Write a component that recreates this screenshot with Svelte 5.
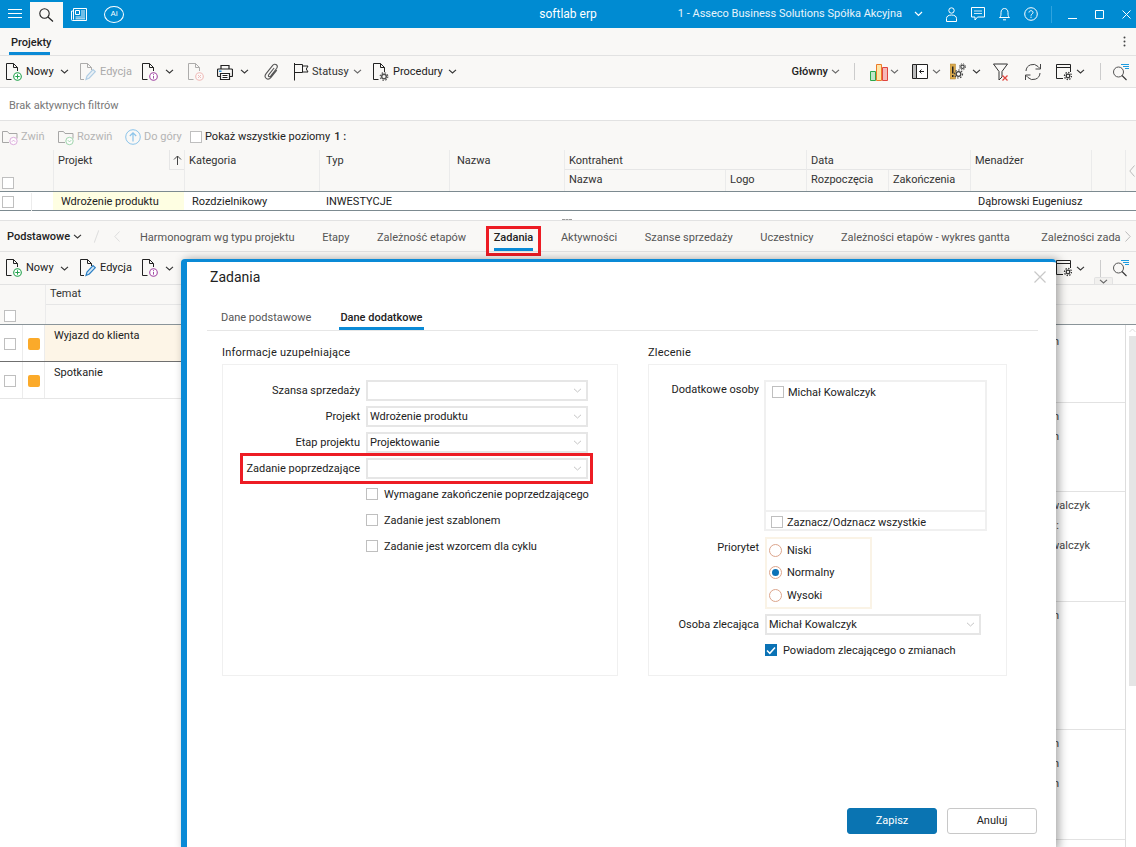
<script>
  const topTools = [
    { i: 'new', t: 'Nowy', w: 74, cg: 6, ch: true },
    { i: 'edit', t: 'Edycja', w: 62, off: true },
    { i: 'info', w: 46, cg: 7, ch: true },
    { i: 'del', w: 29, off: true },
    { i: 'print', w: 47, cg: 7, ch: true },
    { i: 'clip', w: 30 },
    { i: 'flag', t: 'Statusy', w: 79, cg: 4, ch: true, light: true },
    { i: 'proc', t: 'Procedury', w: 90, cg: 5, ch: true }
  ];
  const lowerTools = [
    { i: 'new', t: 'Nowy', w: 74, cg: 6, ch: true },
    { i: 'edit', t: 'Edycja', w: 62 },
    { i: 'info', w: 46, cg: 7, ch: true }
  ];
  const tabs = ['Harmonogram wg typu projektu', 'Etapy', 'Zależność etapów', 'Zadania', 'Aktywności', 'Szanse sprzedaży', 'Uczestnicy', 'Zależności etapów - wykres gantta', 'Zależności zada'];
  const stripRows = [
    { h: 78, lines: [['h', 1]] },
    { h: 89, lines: [['h', 1], ['h', 1]] },
    { h: 110, lines: [['Michał Kowalczyk', 0], [':', 1], ['Michał Kowalczyk', 0]] },
    { h: 128, lines: [['h', 1]] },
    { h: 110, lines: [['h', 1], ['h', 1], ['h', 1]] },
    { h: 7, lines: [] }
  ];
  const formFields = [
    ['Szansa sprzedaży', ''],
    ['Projekt', 'Wdrożenie produktu'],
    ['Etap projektu', 'Projektowanie']
  ];
  const flags = ['Wymagane zakończenie poprzedzającego', 'Zadanie jest szablonem', 'Zadanie jest wzorcem dla cyklu'];
</script>

{#snippet ic(name, w, h)}
  <svg class="ic" width={w} height={h} viewBox="0 0 {w} {h}"><use href="#i-{name}" /></svg>
{/snippet}

{#snippet chev(light)}
  <svg class="chev" class:soft={light} width="9" height="5" viewBox="0 0 9 5"><path d="M1 .8 4.500 4 8 .8" fill="none" stroke="currentColor" stroke-width="1.100" /></svg>
{/snippet}

{#snippet tool(item)}
  <div class="tool" class:off={item.off} class:light={item.light} style="width:{item.w}px">
    {@render ic(item.i, 16, 18)}
    {#if item.t}<span class="tool-label">{item.t}</span>{/if}
    {#if item.ch}<span style="margin-left:{item.cg}px" class="tool-chev">{@render chev(item.light)}</span>{/if}
  </div>
{/snippet}

{#snippet select(value, wide)}
  <div class="select" class:wide>
    <span>{value}</span>
    <svg class="sel-chev" width="9" height="5" viewBox="0 0 9 5"><path d="M1 .8 4.500 4 8 .8" fill="none" stroke="#c4c4c4" stroke-width="1" /></svg>
  </div>
{/snippet}

<svg class="defs" aria-hidden="true">
  <symbol id="i-doc" viewBox="0 0 16 18"><path d="M5.500 16.500H.5V.5h7l4 4V8M7.500.5v4h4" fill="none" stroke="#222" /></symbol>
  <symbol id="i-new" viewBox="0 0 16 18"><use href="#i-doc" /><circle cx="11.500" cy="13.500" r="3.800" fill="#fff" stroke="#23a24d" stroke-width="1.100" /><path d="M11.500 11.300v4.400M9.300 13.500h4.400" stroke="#23a24d" /></symbol>
  <symbol id="i-edit" viewBox="0 0 16 18"><path d="M4 16.500H.5V.5h7l4 4V7M7.500.5v4h4" fill="none" stroke="#222" /><path d="M6 16.500 7 13l6-6.500 2.300 2.200-6 6.300z" fill="#d6e8f6" stroke="#2b7fc4" stroke-width="1.200" /></symbol>
  <symbol id="i-info" viewBox="0 0 16 18"><use href="#i-doc" /><circle cx="11.500" cy="13.500" r="3.800" fill="#fff" stroke="#a349a4" stroke-width="1.100" /><path d="M11.500 13v2.600M11.500 11.200v1" stroke="#a349a4" /></symbol>
  <symbol id="i-del" viewBox="0 0 16 18"><use href="#i-doc" /><circle cx="11.500" cy="13.500" r="3.800" fill="#fff" stroke="#e2504c" stroke-width="1.100" /><path d="m10 12 3 3M13 12l-3 3" stroke="#e2504c" /></symbol>
  <symbol id="i-print" viewBox="0 0 16 18"><path d="M4 6V2.500h8V6M4 13.500H1.500a1 1 0 0 1-1-1V7a1 1 0 0 1 1-1h13a1 1 0 0 1 1 1v5.500a1 1 0 0 1-1 1H12" fill="none" stroke="#222" stroke-width="1.200" /><path d="M3.500 10.500h9v6h-9z" fill="#fff" stroke="#222" stroke-width="1.200" /><path d="M5.500 12.500h5M5.500 14.500h5" stroke="#222" /><path d="M2 7.500h2.500V9H2z" fill="#2b8fd6" /></symbol>
  <symbol id="i-clip" viewBox="0 0 16 18"><path d="M12.800 7.200 7 14.400c-1.500 1.800-3.500 2-4.800 1-1.400-1.100-1.400-3-.1-4.700l6.600-8.300c1-1.300 2.600-1.500 3.700-.6 1.100.9 1.100 2.400.2 3.700l-6 7.600c-.6.700-1.300.8-1.800.4-.5-.4-.5-1.100 0-1.800l5.300-6.700" fill="none" stroke="#555" stroke-width="1.100" /></symbol>
  <symbol id="i-flag" viewBox="0 0 16 18"><path d="M.5 0v17.500M.5 1.500h8v8h-8M8.500 3H14l-1.700 3L14 9H8.500" fill="none" stroke="#222" /></symbol>
  <symbol id="i-proc" viewBox="0 0 16 18"><path d="M5.500 16.500h-5V.5h7l4 4V9M7.500.5v4h4" fill="none" stroke="#222" /><circle cx="11" cy="13.500" r="2.300" fill="none" stroke="#555" stroke-width="1.500" /><circle cx="11" cy="13.500" r="3.800" fill="none" stroke="#555" stroke-width="1.200" stroke-dasharray="1.500 1.500" /></symbol>
  <symbol id="i-chart" viewBox="0 0 20 18"><path d="M1.500 8.500h5v9h-5z" fill="#bfe6c8" stroke="#2aa84a" /><path d="M7.500 1.500h5v16h-5z" fill="#fde6a8" stroke="#ec7a2a" /><path d="M13.500 4.500h5v13h-5z" fill="#f6b8b8" stroke="#e0443e" /></symbol>
  <symbol id="i-panel" viewBox="0 0 16 18"><path d="M.5 1.500h4v14h-4z" fill="#bbb" stroke="#222" /><path d="M4.500 1.500h11v14h-11z" fill="#fff" stroke="#222" /><path d="M12 8.500H7.500M9.500 6.500l-2 2 2 2" fill="none" stroke="#222" /></symbol>
  <symbol id="i-gears" viewBox="0 0 16 18"><path d="M0 1h5.500v15H0z" fill="#d9a94c" stroke="#b0822c" stroke-width=".5" /><path d="M2.750 3.500v7M2.750 12v2" stroke="#222" stroke-width="1.500" /><circle cx="12.500" cy="3.800" r="1.700" fill="none" stroke="#444" stroke-width="1.200" /><circle cx="12.500" cy="3.800" r="3" fill="none" stroke="#444" stroke-dasharray="1.200 1.200" /><circle cx="8.500" cy="11" r="2.300" fill="none" stroke="#444" stroke-width="1.300" /><circle cx="8.500" cy="11" r="4" fill="none" stroke="#444" stroke-width="1.200" stroke-dasharray="1.500 1.500" /></symbol>
  <symbol id="i-filter" viewBox="0 0 16 18"><path d="M.5 1h14L9 8.500V14l-3 3V8.500z" fill="none" stroke="#333" /><path d="m9.500 12.500 5 5M14.500 12.500l-5 5" stroke="#e0443e" stroke-width="1.200" /></symbol>
  <symbol id="i-refresh" viewBox="0 0 16 18"><path d="M1 8a7 7 0 0 1 12-4.500l2 2" fill="none" stroke="#444" /><path d="M15.500 1v5h-5" fill="none" stroke="#444" /><path d="M15 10a7 7 0 0 1-12 4.500l-2-2" fill="none" stroke="#444" /><path d="M.5 17v-5h5" fill="none" stroke="#444" /></symbol>
  <symbol id="i-settings" viewBox="0 0 16 18"><path d="M7 15.500H.5v-14h14V9M.5 4.500h14" fill="none" stroke="#222" /><circle cx="12" cy="13" r="1.800" fill="none" stroke="#333" stroke-width="1.300" /><circle cx="12" cy="13" r="3.500" fill="none" stroke="#333" stroke-width="1.300" stroke-dasharray="1.400 1.300" /></symbol>
  <symbol id="i-search" viewBox="0 0 16 18"><circle cx="5.500" cy="9" r="5" fill="none" stroke="#555" /><path d="m9 12.500 4.500 4.500" stroke="#333" stroke-width="1.100" /><path d="M8 1.500h8M10 3.500h6M12 5.500h4" stroke="#1c9ce0" /></symbol>
  <symbol id="i-folder-up" viewBox="0 0 16 18"><path d="M.5 14.500v-11h5l1.500 2h8v5" fill="none" stroke="#999" /><path d="M.5 14.500H7" stroke="#999" /><circle cx="11.500" cy="13" r="3.700" fill="#fff" stroke="#d79fd8" /><path d="m9.800 13.800 1.700-1.700 1.700 1.700" fill="none" stroke="#d79fd8" /></symbol>
  <symbol id="i-folder-down" viewBox="0 0 16 18"><path d="M.5 14.500v-11h5l1.500 2h8v5" fill="none" stroke="#999" /><path d="M.5 14.500H7" stroke="#999" /><circle cx="11.500" cy="13" r="3.700" fill="#fff" stroke="#8fcf9f" /><path d="m9.800 12.200 1.700 1.700 1.700-1.700" fill="none" stroke="#8fcf9f" /></symbol>
</svg>

<div class="page">
  <header class="topbar">
    <div class="top-left">
      <svg class="burger" width="14" height="10" viewBox="0 0 14 10"><path d="M0 .5h14M0 4.500h14M0 8.500h14" stroke="#fff" stroke-width="1.200" /></svg>
      <div class="top-search">
        <svg width="15" height="14" viewBox="0 0 15 14"><circle cx="5.500" cy="5.500" r="4.700" fill="none" stroke="#222" stroke-width="1.100" /><path d="m9 9 5 4.500" stroke="#222" stroke-width="1.200" /></svg>
      </div>
      <svg class="news" width="16" height="13" viewBox="0 0 16 13"><path d="M2.500.5h13v12H1.500a1 1 0 0 1-1-1V3h2zM2.500 3v8.500" fill="none" stroke="#fff" /><path d="M4.500 2.500h4v4h-4z" fill="none" stroke="#fff" /><path d="M10 3h4M10 5h4M10 7h4M4.500 9H14M4.500 10.800H14" stroke="#fff" stroke-width=".9" /></svg>
      <div class="ai"><span>Ai</span></div>
    </div>
    <div class="brand">softlab erp</div>
    <div class="top-right">
      <span class="company">1 - Asseco Business Solutions Spółka Akcyjna</span>
      <svg class="company-chev" width="9" height="6" viewBox="0 0 9 6"><path d="m1 1 3.500 3.500L8 1" fill="none" stroke="#fff" stroke-width="1.200" /></svg>
      <svg class="t-person" width="11" height="15" viewBox="0 0 11 15"><circle cx="5.500" cy="3.500" r="2.700" fill="none" stroke="#fff" /><path d="M.5 14.500v-3c0-2 1.700-3.500 5-3.500s5 1.500 5 3.500v3z" fill="none" stroke="#fff" /></svg>
      <svg class="t-chat" width="14" height="14" viewBox="0 0 14 14"><path d="M.5.5h13V10h-7L4 13v-3H.5z" fill="none" stroke="#fff" /><path d="M3 4h8M3 6.500h8" stroke="#fff" stroke-width=".8" /></svg>
      <svg class="t-bell" width="11" height="14" viewBox="0 0 11 14"><path d="M.5 10.500c1.500-1 1.500-2.500 1.500-5C2 3 3.500 1.500 5.500 1.500S9 3 9 5.500c0 2.500 0 4 1.500 5zM4 12.800h3" fill="none" stroke="#fff" /></svg>
      <svg class="t-help" width="14" height="14" viewBox="0 0 14 14"><circle cx="7" cy="7" r="6.300" fill="none" stroke="#fff" /><path d="M5 5.500C5 4.300 6 3.700 7 3.700s2 .7 2 1.800c0 1.500-2 1.500-2 3.200M7 9.700v1.200" fill="none" stroke="#fff" /></svg>
      <span class="t-sep"></span>
      <svg class="t-min" width="9" height="1" viewBox="0 0 9 1"><path d="M0 .5h9" stroke="#fff" /></svg>
      <svg class="t-max" width="9" height="9" viewBox="0 0 9 9"><path d="M.5.500h8v8h-8z" fill="none" stroke="#fff" /></svg>
      <svg class="t-close" width="9" height="9" viewBox="0 0 9 9"><path d="m.5.500 8 8M8.500.500l-8 8" stroke="#fff" /></svg>
    </div>
  </header>

  <div class="module-tabs">
    <div class="module-tab">Projekty</div>
    <svg class="kebab" width="3" height="11" viewBox="0 0 3 11"><circle cx="1.500" cy="1.500" r="1" fill="#444" /><circle cx="1.500" cy="5.500" r="1" fill="#444" /><circle cx="1.500" cy="9.500" r="1" fill="#444" /></svg>
  </div>

  <div class="toolbar">
    {#each topTools as item}{@render tool(item)}{/each}
    <div class="tool-right">
      <span class="view-name">Główny</span>
      <span class="vn-chev">{@render chev(true)}</span>
      <span class="tsep first"></span>
      {@render ic('chart', 20, 18)}
      <span class="rc c1">{@render chev(true)}</span>
      {@render ic('panel', 16, 18)}
      <span class="rc c2">{@render chev(true)}</span>
      {@render ic('gears', 16, 18)}
      <span class="rc c3">{@render chev(false)}</span>
      {@render ic('filter', 16, 18)}
      <span class="rg"></span>
      {@render ic('refresh', 16, 18)}
      <span class="rg s"></span>
      {@render ic('settings', 16, 18)}
      <span class="rc c4">{@render chev(false)}</span>
      <span class="tsep"></span>
      {@render ic('search', 16, 18)}
    </div>
  </div>

  <div class="filters">Brak aktywnych filtrów</div>

  <div class="actions">
    <div class="act off one">{@render ic('folder-up', 16, 18)}<span>Zwiń</span></div>
    <div class="act off two">{@render ic('folder-down', 16, 18)}<span>Rozwiń</span></div>
    <div class="act off three">
      <svg width="16" height="16" viewBox="0 0 16 16"><circle cx="8" cy="8" r="7.300" fill="none" stroke="#8cc4ea" /><path d="M8 12.500V4M4.800 7 8 3.800 11.200 7" fill="none" stroke="#8cc4ea" stroke-width="1.200" /></svg>
      <span>Do góry</span>
    </div>
    <span class="check"></span>
    <span class="show-all">Pokaż wszystkie poziomy</span>
    <b class="lvl">1 :</b>
  </div>

  <div class="grid-head">
    <div class="gh span2 chk"><span class="check"></span></div>
    <div class="gh span2">Projekt
      <span class="sort-box"><svg width="9" height="10" viewBox="0 0 9 10"><path d="M4.500 10V1M1 4.500 4.500 1 8 4.500" fill="none" stroke="#444" /></svg></span>
    </div>
    <div class="gh span2">Kategoria</div>
    <div class="gh span2 p7">Typ</div>
    <div class="gh span2 p8">Nazwa</div>
    <div class="gh cols2">Kontrahent</div>
    <div class="gh cols2">Data</div>
    <div class="gh span2">Menadżer</div>
    <div class="gh span2"></div>
    <div class="gh span2 last">
      <svg width="6" height="12" viewBox="0 0 6 12"><path d="M5.500.5.800 6l4.700 5.500" fill="none" stroke="#bbb" /></svg>
    </div>
    <div class="gh sub">Nazwa</div>
    <div class="gh sub">Logo</div>
    <div class="gh sub">Rozpoczęcia</div>
    <div class="gh sub">Zakończenia</div>
  </div>

  <div class="grid-row">
    <div class="gc first"><span class="check"></span><i></i></div>
    <div class="gc yellow">Wdrożenie produktu</div>
    <div class="gc p8c">Rozdzielnikowy</div>
    <div class="gc">INWESTYCJE</div>
    <div class="gc"></div>
    <div class="gc"></div>
    <div class="gc"></div>
    <div class="gc"></div>
    <div class="gc"></div>
    <div class="gc p8c">Dąbrowski Eugeniusz</div>
  </div>

  <div class="splitter"><span class="grip"></span></div>

  <div class="detail-tabs">
    <b class="set">Podstawowe</b>
    <span class="set-chev">{@render chev(false)}</span>
    <span class="slash"></span>
    <svg class="tab-prev" width="6" height="11" viewBox="0 0 6 11"><path d="M5.500.5.800 5.500l4.700 5" fill="none" stroke="#ddd" /></svg>
    <div class="dtabs">
      {#each tabs as t}
        <div class="dtab" class:active={t === 'Zadania'}>{t}</div>
      {/each}
    </div>
    <svg class="tab-next" width="6" height="11" viewBox="0 0 6 11"><path d="m.5.500 4.700 5-4.700 5" fill="none" stroke="#bbb" /></svg>
  </div>

  <div class="toolbar low">
    {#each lowerTools as item}{@render tool(item)}{/each}
    <div class="tool-right">
      {@render ic('settings', 16, 18)}
      <span class="rc c4">{@render chev(false)}</span>
      <span class="tsep"></span>
      {@render ic('search', 16, 18)}
    </div>
    <div class="collapse">{@render chev(true)}</div>
  </div>

  <div class="lower">
    <div class="lower-head">
      <div class="lh-check"><span class="check"></span></div>
      <div class="lh-col">
        <div class="lh-title">Temat</div>
      </div>
    </div>
    <div class="lower-body">
      <div class="task-col">
        <div class="task sel">
          <div class="tk-c"><span class="check"></span></div>
          <div class="tk-m"><span class="mark"></span></div>
          <div class="tk-t">Wyjazd do klienta</div>
        </div>
        <div class="task">
          <div class="tk-c"><span class="check"></span></div>
          <div class="tk-m"><span class="mark"></span></div>
          <div class="tk-t">Spotkanie</div>
        </div>
      </div>
      <div class="strip">
        {#each stripRows as r}
          <div class="strip-row" style="height:{r.h}px">
            {#each r.lines as [txt, short]}
              <div class="strip-line" class:short>{txt}</div>
            {/each}
          </div>
        {/each}
      </div>
      <div class="scroll">
        <svg width="7" height="5" viewBox="0 0 7 5"><path d="M.5 4 3.500 1l3 3" fill="none" stroke="#ddd" /></svg>
        <span class="thumb"></span>
      </div>
    </div>
  </div>

  <section class="modal">
    <div class="m-head">
      <h2>Zadania</h2>
      <svg width="12" height="12" viewBox="0 0 12 12"><path d="m.5.500 11 11M11.500.500l-11 11" stroke="#c8c8c8" stroke-width="1.200" /></svg>
    </div>
    <div class="m-tabs">
      <div class="m-tab">Dane podstawowe</div>
      <div class="m-tab on">Dane dodatkowe</div>
    </div>
    <div class="m-body">
      <div class="sec left">
        <h3>Informacje uzupełniające</h3>
        <div class="sec-box">
          {#each formFields as [label, val]}
            <div class="f-row"><span class="lab">{label}</span>{@render select(val)}</div>
          {/each}
          <div class="f-row hl"><span class="lab">Zadanie poprzedzające</span>{@render select('')}</div>
          <div class="flags">
            {#each flags as f}
              <div class="flag"><span class="check"></span><span class="nudge">{f}</span></div>
            {/each}
          </div>
        </div>
      </div>
      <div class="sec right">
        <h3>Zlecenie</h3>
        <div class="sec-box r">
          <div class="r-row">
            <span class="lab top">Dodatkowe osoby</span>
            <div class="listbox">
              <div class="lb-items"><div class="lb-item"><span class="check"></span><span class="nudge">Michał Kowalczyk</span></div></div>
              <div class="lb-foot"><span class="check"></span><span class="nudge">Zaznacz/Odznacz wszystkie</span></div>
            </div>
          </div>
          <div class="r-row prio">
            <span class="lab top2">Priorytet</span>
            <div class="radios">
              <div class="radio"><span class="dot"></span><span class="nudge">Niski</span></div>
              <div class="radio"><span class="dot sel"></span><span>Normalny</span></div>
              <div class="radio"><span class="dot"></span><span class="nudge">Wysoki</span></div>
            </div>
          </div>
          <div class="r-row who">
            <span class="lab">Osoba zlecająca</span>
            {@render select('Michał Kowalczyk', true)}
          </div>
          <div class="notify">
            <span class="check on"><svg width="10" height="9" viewBox="0 0 10 9"><path d="M1 4.500 3.800 7.300 9 1.500" fill="none" stroke="#fff" stroke-width="1.500" /></svg></span>
            <span class="nudge">Powiadom zlecającego o zmianach</span>
          </div>
        </div>
      </div>
    </div>
    <div class="m-foot">
      <button class="btn primary">Zapisz</button>
      <button class="btn">Anuluj</button>
    </div>
  </section>
</div>

<style>
  :global(body) { margin: 0; background: #fff; }
  .defs { display: none; }
  .page {
    position: relative; width: 1136px; height: 847px; overflow: hidden; background: #fff;
    font: 11px/14px Roboto, "Liberation Sans", sans-serif; color: #222;
  }
  svg { display: block; flex: none; }

  .topbar { height: 28px; background: #008bd2; display: grid; grid-template-columns: 1fr auto 1fr; align-items: center; color: #fff; }
  .top-left { display: flex; align-items: center; height: 28px; }
  .burger { margin-left: 8px; }
  .top-search { width: 33px; height: 26px; margin: 2px 0 0 8px; background: #f9f8f6; display: flex; align-items: center; justify-content: center; }
  .news { margin-left: 8px; }
  .ai { width: 18px; height: 15px; margin-left: 17px; border: 1px solid #fff; border-radius: 50%; display: flex; align-items: center; justify-content: center; font-size: 8px; }
  .brand { font-size: 12px; }
  .top-right { display: flex; align-items: center; justify-content: flex-end; }
  .company { font-size: 11px; color: #e8f4fb; }
  .company-chev { margin-left: 12px; }
  .t-person { margin-left: 23px; }
  .t-chat { margin-left: 14px; }
  .t-bell { margin-left: 14px; }
  .t-help { margin-left: 14px; }
  .t-sep { width: 1px; height: 17px; background: #2fa3de; margin-left: 13px; }
  .t-min { margin: 8px 0 0 16px; }
  .t-max { margin-left: 18px; }
  .t-close { margin: 0 5px 0 18px; }

  .module-tabs { height: 27px; background: #f9f8f6; border-bottom: 1px solid #e2e2e2; display: flex; justify-content: space-between; align-items: center; padding: 0 9px; }
  .module-tab { font-weight: 500; height: 27px; width: 41px; box-sizing: border-box; padding: 8px 2px 0; border-bottom: 3px solid #0a8ad6; white-space: nowrap; }
  .kebab { margin-right: 1px; }

  .toolbar { height: 31px; background: #f9f8f6; border-bottom: 1px solid #e2e2e2; display: flex; align-items: center; padding-left: 6px; position: relative; }
  .toolbar.low { height: 32px; }
  .tool { display: flex; align-items: center; flex: none; }
  .tool.off .ic { opacity: .35; }
  .tool.off .tool-label { color: #aaa; }
  .tool-label { margin-left: 4px; }
  .tool.light .tool-label { margin-left: 2px; color: #333; }
  .tool-chev { display: block; }
  .chev { color: #333; }
  .chev.soft { color: #666; }
  .tool-right { margin-left: auto; display: flex; align-items: center; padding-right: 7px; }
  .view-name { font-weight: 500; }
  .vn-chev { margin-left: 3px; }
  .tsep { width: 1px; height: 17px; background: #ccc; margin: 0 12px 0 15px; }
  .tsep.first { margin: 0 14px; }
  .rc { display: block; box-sizing: border-box; }
  .c1 { width: 23px; padding-left: 1px; }
  .c2 { width: 22px; padding-left: 4px; }
  .c3 { width: 27px; padding-left: 6px; }
  .c4 { width: 13px; padding-left: 4px; }
  .rg { width: 16px; }
  .rg.s { width: 15px; }
  .collapse { position: absolute; left: 1094px; top: 25px; width: 19px; height: 7px; background: #f1f0ee; border: 1px solid #e2e2e2; border-bottom: 0; border-radius: 2px 2px 0 0; box-sizing: border-box; display: flex; justify-content: center; align-items: center; }

  .filters { height: 32px; background: #fff; border-bottom: 1px solid #e2e2e2; padding-left: 9px; line-height: 35px; color: #777; }

  .actions { height: 27px; padding-top: 2px; background: #f9f8f6; display: flex; align-items: center; }
  .act { display: flex; align-items: center; }
  .act.off span { color: #b4b4b4; margin-left: 3px; }
  .act .ic { opacity: .85; }
  .act.one { margin-left: 2px; width: 56px; }
  .act.two { width: 67px; }
  .act.three { width: 65px; }
  .check { display: block; width: 12px; height: 12px; box-sizing: border-box; border: 1px solid #bfbfbf; background: #fff; flex: none; }
  .show-all { margin-left: 3px; }
  .lvl { margin-left: 4px; font-weight: 500; }

  .grid-head { display: grid; grid-template-columns: 53px 131px 135px 130px 115px 161px 81px 82px 82px 121px 34px 11px; grid-template-rows: 20px 21px; background: #f9f8f6; border-bottom: 1px solid #7c8a90; }
  .gh { border-left: 1px solid #ebebeb; padding: 4px 0 0 4px; box-sizing: border-box; color: #333; position: relative; white-space: nowrap; }
  .span2 { grid-row: span 2; }
  .cols2 { border-bottom: 1px solid #e6e6e6; }
  .sub { grid-row: 2; padding-top: 3px; }
  .gh.chk { border-left: 0; padding: 27px 0 0 2px; }
  .gh.p7 { padding-left: 6px; }
  .gh.p8 { padding-left: 7px; }
  .sort-box { position: absolute; right: 0; top: 0; width: 15px; height: 20px; border-left: 1px solid #e6e6e6; border-bottom: 1px solid #e6e6e6; box-sizing: border-box; display: flex; justify-content: center; align-items: center; }
  .gh.last { display: flex; align-items: center; padding: 0 0 0 3px; }
  .grid-head > .cols2:nth-child(6) { grid-column: 6 / span 2; }
  .grid-head > .cols2:nth-child(7) { grid-column: 8 / span 2; }
  .grid-head > .sub:nth-child(11) { grid-column: 6; }
  .grid-head > .sub:nth-child(12) { grid-column: 7; }
  .grid-head > .sub:nth-child(13) { grid-column: 8; }
  .grid-head > .sub:nth-child(14) { grid-column: 9; }

  .grid-row { display: grid; grid-template-columns: 53px 131px 135px 130px 115px 161px 81px 82px 82px 121px 34px 11px; height: 18px; border-bottom: 1px solid #7c8a90; line-height: 20px; }
  .gc { padding-left: 7px; white-space: nowrap; }
  .gc.first { padding: 0 0 0 2px; display: flex; align-items: center; }
  .gc.first i { width: 1px; height: 18px; background: #ececec; margin-left: 17px; }
  .gc.yellow { background: #fefee2; padding-left: 8px; height: 18px; line-height: 20px; }
  .gc.p8c { padding-left: 8px; }
  .splitter { height: 9px; border-bottom: 1px solid #e2e2e2; position: relative; }
  .grip { position: absolute; left: 562px; top: 8px; width: 10px; border-top: 1px dashed #999; }

  .detail-tabs { height: 30px; background: #f9f8f6; border-bottom: 1px solid #e2e2e2; display: flex; align-items: center; position: relative; }
  .set { font-weight: 500; margin-left: 7px; width: 66px; padding-top: 2px; }
  .set-chev { width: 20px; }
  .slash { width: 1px; height: 13px; background: #ddd; transform: rotate(20deg); margin-left: 3px; }
  .tab-prev { margin-left: 17px; }
  .dtabs { display: flex; gap: 27.600px; margin-left: 20px; width: 979px; white-space: nowrap; flex: none; height: 30px; }
  .dtab { line-height: 33px; color: #555; flex: none; position: relative; }
  .dtab:last-child { margin-left: 4px; }
  .dtab.active { font-weight: 500; color: #222; }
  .dtab.active::after { content: ""; position: absolute; left: 0; right: 0; bottom: 0; height: 3px; background: #0a8ad6; }
  .tab-next { margin-left: 6px; }
  .detail-tabs::after { content: ""; position: absolute; left: 486px; top: 5px; width: 49px; height: 24px; border: 3px solid #ed1c24; z-index: 1; }

  .lower-head { height: 39px; background: #f9f8f6; border-bottom: 1px solid #8a9499; display: flex; }
  .lh-check { width: 45px; padding: 25px 0 0 4px; box-sizing: border-box; }
  .lh-col { flex: 1; border-left: 1px solid #ebebeb; }
  .lh-title { height: 20px; border-bottom: 1px solid #e6e6e6; padding: 2px 0 0 4px; box-sizing: border-box; color: #333; }
  .lower-body { display: flex; height: 522px; }
  .task-col { width: 300px; flex: none; }
  .task { display: flex; height: 36px; border-bottom: 1px solid #e6e6e6; }
  .task.sel { border-bottom-color: #6f6f6f; }
  .tk-c { width: 23px; border-right: 1px solid #ececec; padding: 13px 0 0 4px; box-sizing: border-box; }
  .tk-m { width: 22px; border-right: 1px solid #ececec; box-sizing: border-box; padding: 13px 0 0 5px; }
  .mark { display: block; width: 12px; height: 12px; background: #fbaa2a; border-radius: 2px; }
  .tk-t { flex: 1; padding: 4px 0 0 9px; }
  .task.sel .tk-t { background: #fdf5e7; }
  .strip { flex: 1; border-right: 1px solid #ddd; }
  .strip-row { border-bottom: 1px solid #e2e2e2; box-sizing: border-box; padding-top: 7px; }
  .strip-row:first-child { padding-top: 10px; }
  .strip-line { height: 20px; text-align: right; padding-right: 35px; color: #444; }
  .strip-line.short { padding-right: 66px; }
  .scroll { width: 10px; flex: none; padding-left: 3px; box-sizing: border-box; }
  .scroll svg { margin-top: 3px; }
  .thumb { display: block; width: 7px; height: 350px; background: #e5e5e5; margin-top: 3px; }

  .modal { position: absolute; left: 181px; top: 259px; width: 875px; height: 592px; box-sizing: border-box; background: #fff; border-left: 6px solid #0a8ad6; border-top: 3px solid #0a8ad6; border-radius: 4px; box-shadow: 3px 0 10px rgba(0,0,0,.35); z-index: 2; display: flex; flex-direction: column; }
  .m-head { height: 30px; display: flex; justify-content: space-between; align-items: center; padding: 0 10px 0 23px; flex: none; }
  h2 { margin: 0; font-size: 14px; font-weight: 400; line-height: 30px; }
  .m-tabs { margin: 18px 18px 0 20px; height: 20px; border-bottom: 1px solid #e6e6e6; display: flex; gap: 28px; padding-left: 14px; flex: none; }
  .m-tab { height: 20px; box-sizing: border-box; padding-top: 1px; color: #555; }
  .m-tab.on { font-weight: 500; color: #222; border-bottom: 3px solid #0a8ad6; padding: 1px 1px 0; }
  .m-body { display: flex; gap: 30px; padding: 15px 0 0 35px; flex: none; }
  h3 { margin: 0; font-size: 11px; font-weight: 400; line-height: 14px; color: #222; letter-spacing: .02em; }
  .sec.left { width: 396px; }
  .sec.right { width: 359px; }
  .sec-box { margin-top: 4px; height: 312px; box-sizing: border-box; border: 1px solid #f0f0f0; padding-top: 15px; }
  .f-row { display: grid; grid-template-columns: 137px 222px; column-gap: 6px; height: 21px; margin-bottom: 5px; align-items: center; position: relative; }
  .lab { text-align: right; white-space: nowrap; }
  .hl::after { content: ""; position: absolute; left: 17px; right: -5px; top: -5px; bottom: -5px; border: 3px solid #ed1c24; }
  .f-row.hl { width: 365px; }
  .select { height: 21px; box-sizing: border-box; border: 2px solid #e6e6e6; display: flex; align-items: center; justify-content: space-between; padding: 0 4px 0 2px; background: #fff; }
  .select.wide { width: 216px; margin-left: 1px; }
  .flags { display: grid; row-gap: 14px; margin: 9px 0 0 143px; }
  .flag { display: flex; align-items: center; gap: 6px; height: 12px; white-space: nowrap; }
  .nudge { padding-top: 2px; }
  .r-row { display: flex; }
  .r-row .lab { width: 110px; margin-right: 5px; flex: none; }
  .top { padding-top: 3px; }
  .top2 { padding-top: 4px; }
  .listbox { width: 223px; height: 151px; box-sizing: border-box; border: 2px solid #f0f0f0; display: flex; flex-direction: column; }
  .lb-items { flex: 1; padding: 4px 0 0 6px; }
  .lb-item { display: flex; align-items: center; gap: 4px; height: 12px; }
  .lb-foot { height: 19px; border-top: 2px solid #f0f0f0; box-sizing: border-box; display: flex; align-items: center; gap: 4px; padding: 3px 0 0 5px; white-space: nowrap; }
  .prio { margin-top: 6px; }
  .radios { width: 107px; height: 72px; box-sizing: border-box; border: 2px solid #faf3e6; margin-left: 1px; }
  .radio { display: flex; align-items: center; height: 22.500px; padding-left: 2px; gap: 5px; }
  .dot { display: block; width: 13px; height: 13px; border-radius: 50%; box-sizing: border-box; border: 1px solid #dca58c; background: #fff; flex: none; position: relative; }
  .dot.sel::after { content: ""; position: absolute; inset: 2px; background: #0a72b8; border-radius: 50%; }
  .who { margin-top: 5px; align-items: center; }
  .notify { display: flex; align-items: center; gap: 6px; margin: 9px 0 0 116px; height: 12px; }
  .check.on { background: #0a72b5; border-color: #0a72b5; display: flex; align-items: center; justify-content: center; }
  .m-foot { margin-top: 132px; display: flex; justify-content: flex-end; gap: 10px; padding-right: 19px; flex: none; }
  .btn { width: 90px; height: 26px; box-sizing: border-box; border: 1px solid #c8c8c8; border-radius: 3px; background: #fff; font: inherit; color: #222; padding: 0; }
  .btn.primary { background: #0a74b2; border-color: #0a74b2; color: #fff; }
</style>
